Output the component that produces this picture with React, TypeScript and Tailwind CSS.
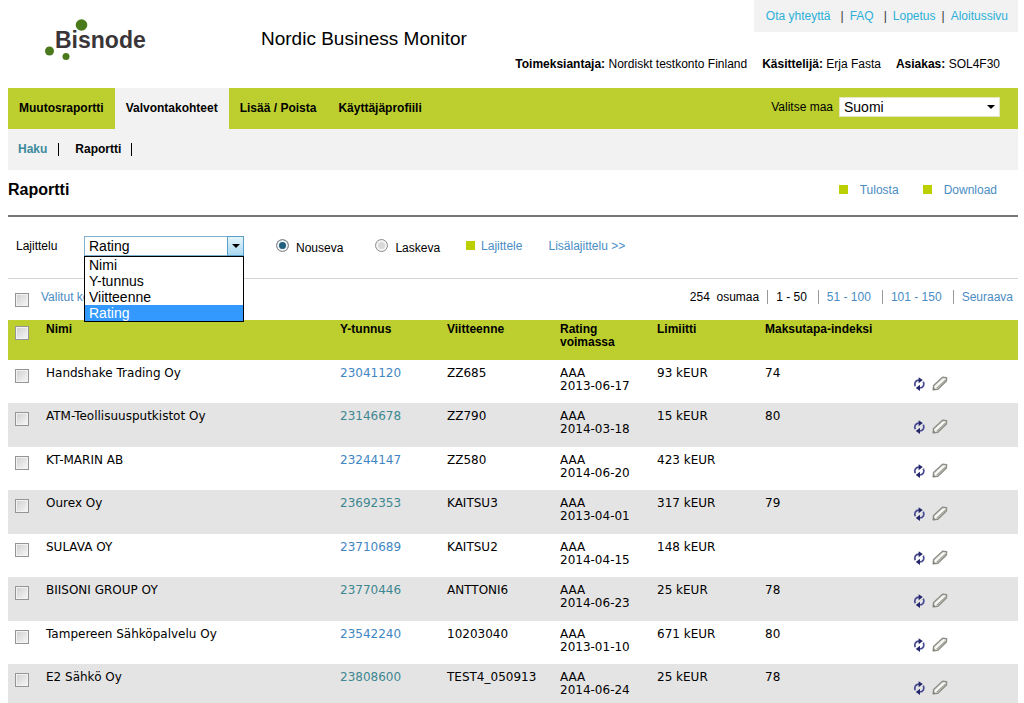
import React, { useState } from "react";

interface Company {
  name: string;
  businessId: string;
  reference: string;
  rating: string;
  ratingDate: string;
  limit: string;
  paymentIndex: string;
}

const companies: Company[] = [
  { name: "Handshake Trading Oy", businessId: "23041120", reference: "ZZ685", rating: "AAA", ratingDate: "2013-06-17", limit: "93 kEUR", paymentIndex: "74" },
  { name: "ATM-Teollisuusputkistot Oy", businessId: "23146678", reference: "ZZ790", rating: "AAA", ratingDate: "2014-03-18", limit: "15 kEUR", paymentIndex: "80" },
  { name: "KT-MARIN AB", businessId: "23244147", reference: "ZZ580", rating: "AAA", ratingDate: "2014-06-20", limit: "423 kEUR", paymentIndex: "" },
  { name: "Ourex Oy", businessId: "23692353", reference: "KAITSU3", rating: "AAA", ratingDate: "2013-04-01", limit: "317 kEUR", paymentIndex: "79" },
  { name: "SULAVA OY", businessId: "23710689", reference: "KAITSU2", rating: "AAA", ratingDate: "2014-04-15", limit: "148 kEUR", paymentIndex: "" },
  { name: "BIISONI GROUP OY", businessId: "23770446", reference: "ANTTONI6", rating: "AAA", ratingDate: "2014-06-23", limit: "25 kEUR", paymentIndex: "78" },
  { name: "Tampereen Sähköpalvelu Oy", businessId: "23542240", reference: "10203040", rating: "AAA", ratingDate: "2013-01-10", limit: "671 kEUR", paymentIndex: "80" },
  { name: "E2 Sähkö Oy", businessId: "23808600", reference: "TEST4_050913", rating: "AAA", ratingDate: "2014-06-24", limit: "25 kEUR", paymentIndex: "78" },
];

const tabs = ["Muutosraportti", "Valvontakohteet", "Lisää / Poista", "Käyttäjäprofiili"];
const sortOptions = ["Nimi", "Y-tunnus", "Viitteenne", "Rating"];

const Logo = () => (
  <svg width="104" height="44" viewBox="0 0 104 44" role="img" aria-label="Bisnode">
    <circle cx="37.5" cy="7" r="5.8" fill="#4b7a1c" />
    <circle cx="5.5" cy="33" r="4.5" fill="#4b7a1c" />
    <circle cx="22" cy="38.5" r="3.5" fill="#4b7a1c" />
    <text x="11" y="30" fontFamily="'Liberation Sans', Arial, sans-serif" fontSize="23" fontWeight="bold" fill="#3a3538">
      Bisnode
    </text>
  </svg>
);

const RefreshIcon = () => (
  <svg width="13" height="14" viewBox="0 0 13 14" fill="none">
    <path d="M2.2 9.2C1 6 2.6 3.2 6 3.1" stroke="#4a4c93" strokeWidth="1.7" />
    <path d="M10.3 4.6C11.8 7.8 10.2 10.9 6.6 11" stroke="#4a4c93" strokeWidth="1.7" />
    <path d="M5.6 0.2L9.8 3.1L5.6 6.2Z" fill="#25276b" />
    <path d="M7 7.8L2.8 10.9L7 13.9Z" fill="#25276b" />
  </svg>
);

const PencilIcon = () => (
  <svg width="16" height="15" viewBox="0 0 16 15" strokeLinejoin="round">
    <path d="M1.2 13.8L1.6 9.4L10.6 1.2L14.6 1.6L14.4 5L5.6 13.4Z" fill="#e9e9e4" stroke="#8e8e86" strokeWidth="1.4" />
    <path d="M3.2 11.4L12.4 2.8" stroke="#fff" strokeWidth="1.2" />
    <path d="M4.6 12.4L13.6 4" stroke="#a3a39b" strokeWidth="1.2" />
    <path d="M0.8 14.2L1.4 11L4 13.8Z" fill="#85857e" />
  </svg>
);

const DropArrow = () => (
  <svg width="8" height="4" viewBox="0 0 8 4">
    <path d="M0 0H8L4 4Z" fill="#000" />
  </svg>
);

const Checkbox = ({ label }: { label: string }) => (
  <input
    type="checkbox"
    aria-label={label}
    className="block size-[14px] appearance-none border border-[#959595] bg-linear-to-br from-[#cfcfcf] to-[#f8f8f8] shadow-[inset_0_0_0_1px_#f2f2f2] checked:from-[#3c6f96] checked:to-[#3c6f96]"
  />
);

const App = () => {
  const [country, setCountry] = useState("Suomi");
  const [sortBy, setSortBy] = useState("Rating");
  const [sortOpen, setSortOpen] = useState(true);
  const [direction, setDirection] = useState("asc");

  const radioClass =
    "size-[13px] appearance-none rounded-full border border-[#8e8f8f] bg-[#d9d9d9] shadow-[inset_0_0_0_2px_#f4f4f4] checked:bg-[#1f5f80]";

  return (
    <div className="bg-white pr-[6px] pl-2 font-['Liberation_Sans',Arial,sans-serif] text-[12px] leading-4 text-black">
      {/* Header */}
      <header className="flex h-[88px] items-start">
        <div className="w-[253px] pt-[18px] pl-9">
          <Logo />
        </div>
        <h1 className="pt-[27px] text-[19px] leading-6">Nordic Business Monitor</h1>
        <div className="ml-auto flex flex-col items-end gap-6">
          <div className="flex h-8 w-[264px] items-center justify-end gap-[6px] bg-[#f2f2f2] pr-[10px] whitespace-nowrap text-[#2bb0d8]">
            <a href="#contact" className="mr-1">Ota yhteyttä</a>
            <span className="text-[#333]">|</span>
            <a href="#faq" className="mr-1">FAQ</a>
            <span className="text-[#333]">|</span>
            <a href="#logout">Lopetus</a>
            <span className="text-[#333]">|</span>
            <a href="#home">Aloitussivu</a>
          </div>
          <div className="flex gap-[15px] pr-[18px]">
            <span><b>Toimeksiantaja:</b> Nordiskt testkonto Finland</span>
            <span><b>Käsittelijä:</b> Erja Fasta</span>
            <span><b>Asiakas:</b> SOL4F30</span>
          </div>
        </div>
      </header>

      {/* Main navigation */}
      <nav className="flex h-[41px] items-center bg-[#bdcf2f]">
        {tabs.map((tab) => (
          <a
            key={tab}
            href="#tab"
            className={`flex h-full items-center px-[11px] pb-[2px] font-bold ${tab === "Valvontakohteet" ? "bg-[#f2f2f2]" : ""}`}
          >
            {tab}
          </a>
        ))}
        <div className="mr-[18px] mb-1 ml-auto flex items-center gap-[6px]">
          <label htmlFor="country">Valitse maa</label>
          <div className="relative">
            <select
              id="country"
              value={country}
              onChange={(e) => setCountry(e.target.value)}
              className="block h-5 w-[161px] appearance-none border border-[#e3e8c0] bg-white px-1 text-[14px] leading-4"
            >
              <option>Suomi</option>
              <option>Ruotsi</option>
              <option>Norja</option>
              <option>Tanska</option>
            </select>
            <span className="pointer-events-none absolute inset-y-0 right-[5px] flex items-center">
              <DropArrow />
            </span>
          </div>
        </div>
      </nav>
      <nav className="flex h-[41px] items-center bg-[#f2f2f2] pl-[10px] font-bold">
        <a href="#search" className="mr-[10px] border-r border-black pr-[11px] leading-[13px] text-[#3c8a9c]">Haku</a>
        <a href="#report" className="ml-[6px] border-r border-black pr-[10px] leading-[13px]">Raportti</a>
      </nav>

      {/* Page title */}
      <div className="flex h-[47px] items-center justify-between border-b-2 border-[#777] pb-[6px]">
        <h2 className="text-[16px] font-bold">Raportti</h2>
        <div className="flex items-center gap-6 pr-[21px] text-[#4a8cc4]">
          <a href="#print" className="flex items-center gap-3">
            <span className="size-[9px] bg-[#bccf00]" />
            Tulosta
          </a>
          <a href="#download" className="flex items-center gap-3">
            <span className="size-[9px] bg-[#bccf00]" />
            Download
          </a>
        </div>
      </div>

      {/* Sorting */}
      <form className="flex h-[62px] items-center border-b border-[#d4d4d4] pb-1 pl-2" onSubmit={(e) => e.preventDefault()}>
        <label htmlFor="sort" className="w-[68px]">Lajittelu</label>
        <div className="relative">
          <select
            id="sort"
            value={sortBy}
            onChange={(e) => setSortBy(e.target.value)}
            onMouseDown={(e) => {
              e.preventDefault();
              setSortOpen(!sortOpen);
            }}
            className="block h-5 w-40 appearance-none border border-[#7fb1cf] bg-white px-1 text-[14px] leading-4"
          >
            {sortOptions.map((option) => (
              <option key={option}>{option}</option>
            ))}
          </select>
          <span className="pointer-events-none absolute inset-y-0 right-0 flex w-[17px] items-center justify-center border border-[#5a9fc8] bg-linear-to-b from-[#e4f4fc] to-[#a9d8f0]">
            <DropArrow />
          </span>
          {sortOpen && (
            <ul role="listbox" aria-label="Lajittelu" className="absolute top-full left-0 z-10 w-full border border-black bg-white text-[14px] leading-4">
              {sortOptions.map((option) => (
                <li
                  key={option}
                  role="option"
                  aria-selected={option === sortBy}
                  onClick={() => {
                    setSortBy(option);
                    setSortOpen(false);
                  }}
                  className={`px-1 ${option === sortBy ? "bg-[#3399ff] text-white" : ""}`}
                >
                  {option}
                </li>
              ))}
            </ul>
          )}
        </div>
        <label className="ml-8 flex items-center gap-[7px]">
          <input type="radio" name="direction" checked={direction === "asc"} onChange={() => setDirection("asc")} className={radioClass} />
          <span className="pt-1">Nouseva</span>
        </label>
        <label className="ml-8 flex items-center gap-[7px]">
          <input type="radio" name="direction" checked={direction === "desc"} onChange={() => setDirection("desc")} className={radioClass} />
          <span className="pt-1">Laskeva</span>
        </label>
        <button type="submit" className="ml-[26px] flex items-center gap-[6px] text-[#4a8cc4]">
          <span className="size-[9px] bg-[#bccf00]" />
          Lajittele
        </button>
        <a href="#more" className="ml-[26px] text-[#4a8cc4]">Lisälajittelu &gt;&gt;</a>
      </form>

      {/* Selection and paging */}
      <div className="flex h-[41px] items-center justify-between pr-[5px] pl-[7px]">
        <div className="flex items-center gap-3">
          <Checkbox label="Valitut kohteet" />
          <a href="#selected" className="pb-[6px] text-[#4a8cc4]">Valitut kohteet</a>
        </div>
        <div className="flex items-center pb-[6px] text-[#4a8cc4]">
          <span className="pr-2 text-black">254&nbsp; osumaa</span>
          <span className="border-l border-[#999] pr-[11px] pl-2 leading-[14px] text-black">1 - 50</span>
          <a href="#51" className="border-l border-[#999] pr-[11px] pl-2 leading-[14px]">51 - 100</a>
          <a href="#101" className="border-l border-[#999] pr-[11px] pl-2 leading-[14px]">101 - 150</a>
          <a href="#next" className="border-l border-[#999] pl-2 leading-[14px]">Seuraava</a>
        </div>
      </div>

      {/* Results */}
      <table className="w-full table-fixed text-left leading-[13px]">
        <colgroup>
          <col className="w-[38px]" />
          <col />
          <col className="w-[107px]" />
          <col className="w-[113px]" />
          <col className="w-[97px]" />
          <col className="w-[108px]" />
          <col className="w-[148px]" />
          <col className="w-[105px]" />
        </colgroup>
        <thead className="bg-[#bdcf2f]">
          <tr className="h-10 align-top *:pt-[3px]">
            <th className="pl-[7px]">
              <div className="pt-[3px]"><Checkbox label="Valitse kaikki" /></div>
            </th>
            <th>Nimi</th>
            <th>Y-tunnus</th>
            <th>Viitteenne</th>
            <th>Rating<br />voimassa</th>
            <th>Limiitti</th>
            <th>Maksutapa-indeksi</th>
            <th aria-label="Toiminnot" />
          </tr>
        </thead>
        <tbody className="font-['DejaVu_Sans',Verdana,sans-serif]">
          {companies.map((company) => (
            <tr key={company.businessId} className="group h-[43px] align-top *:pt-[7px] even:h-[44px] even:bg-[#e4e4e4]">
              <td className="pl-[7px]">
                <div className="pt-[2px]"><Checkbox label={company.name} /></div>
              </td>
              <td>{company.name}</td>
              <td>
                <a href="#company" className="text-[#3f86c2] group-even:text-[#3e8791]">{company.businessId}</a>
              </td>
              <td>{company.reference}</td>
              <td>{company.rating}<br />{company.ratingDate}</td>
              <td>{company.limit}</td>
              <td>{company.paymentIndex}</td>
              <td>
                <div className="flex items-center gap-[6px] pt-[9px]">
                  <button type="button" aria-label="Päivitä"><RefreshIcon /></button>
                  <button type="button" aria-label="Muokkaa"><PencilIcon /></button>
                </div>
              </td>
            </tr>
          ))}
        </tbody>
      </table>
    </div>
  );
};

export default App;
